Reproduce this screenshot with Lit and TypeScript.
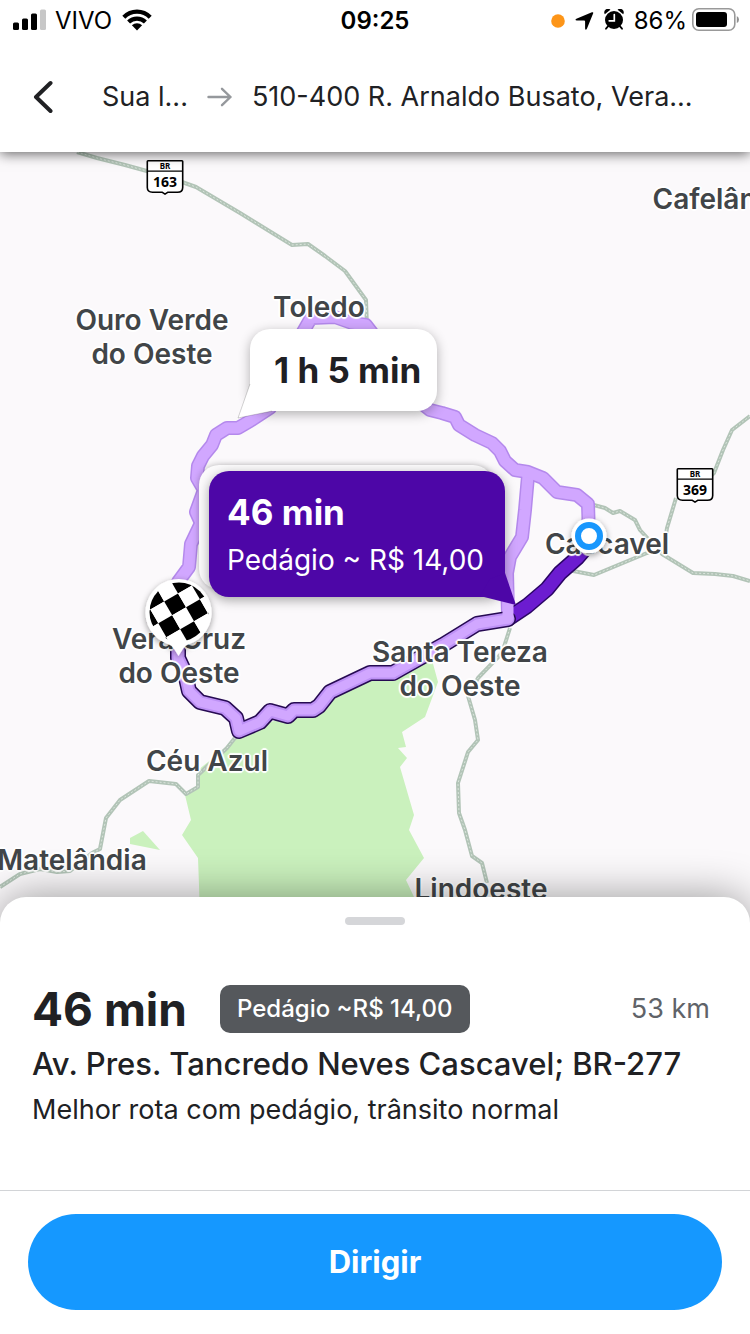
import { LitElement, html, svg, css } from "lit";
import { customElement } from "lit/decorators.js";
import { styleMap } from "lit/directives/style-map.js";

/* The map is drawn in its own coordinate space; overlays are placed in percent of it. */
const MAP_W = 750;
const MAP_H = 770;
const at = (x: number, y: number) =>
  styleMap({ left: `${(x / MAP_W) * 100}%`, top: `${(y / MAP_H) * 100}%` });

const PLACES: { x: number; y: number; lines: string[] }[] = [
  { x: 725, y: 47, lines: ["Cafelândia"] },
  { x: 319, y: 155, lines: ["Toledo"] },
  { x: 152, y: 185, lines: ["Ouro Verde", "do Oeste"] },
  { x: 607, y: 392, lines: ["Cascavel"] },
  { x: 179, y: 504, lines: ["Vera Cruz", "do Oeste"] },
  { x: 460, y: 517, lines: ["Santa Tereza", "do Oeste"] },
  { x: 207, y: 609, lines: ["Céu Azul"] },
  { x: 72, y: 708, lines: ["Matelândia"] },
  { x: 481, y: 737, lines: ["Lindoeste"] },
];

const ROADS = [
  "M77 0L97 6L125 13L165 24L196 35L240 61L292 93L308 92L325 104L345 119L366 148L367 175",
  "M750 264L732 278L723 298L714 321L700 334M676 346L667 376L664 395",
  "M590 352L605 356L613 361L620 359L635 368L640 378L662 402L693 421L715 422L733 424L750 429",
  "M568 418L594 423L647 401L660 398",
  "M510 476L502 501L478 526L468 544L475 568L478 588L468 600L458 631L459 661L465 678L472 704L482 711L487 731",
  "M238 582L227 596L198 623L198 635L186 642L176 632L149 629L120 648L106 666L100 697L92 701L70 719L57 720L40 717L20 722L0 735",
];

const ALT_ROUTE =
  "M178 430L189 415L191 392L201 371L196 360L204 338L197 326L198 314L203 304L212 293L216 283L227 276L238 276L250 269L270 256L303 180L311 166L335 165L352 171L366 173L376 186L420 250L430 258L442 261L455 265L459 273L475 283L492 291L500 299L505 309L515 318L528 320L543 326L557 340L577 343L588 352L589 384";
const LINK_ROUTE = "M528 324L525 358L522 385L510 405L507 421L508 462";
const TOLL_ROUTE =
  "M178 498L178 506L185 521L189 539L200 550L225 556L236 566L239 579L260 570L270 559L288 564L294 558L313 558L319 554L330 540L370 521L393 521L400 517L443 493L477 472L508 467";
const LEAD_ROUTE = "M509 466L527 454L547 437L560 421L577 406L589 392";

const line = (d: string, stroke: string, width: number, cap = "round") => svg`
  <path d=${d} fill="none" stroke=${stroke} stroke-width=${width}
    stroke-linejoin="round" stroke-linecap=${cap}></path>`;

const shield = (x: number, y: number, num: string) => svg`
  <g transform="translate(${x} ${y})">
    <path d="M1.5 .8H35.5Q36.2 .8 36.2 1.5V27.5Q36.2 32.2 31 32.2H21.5L18.5 34.2L15.5 32.2H6Q.8 32.2 .8 27.5V1.5Q.8 .8 1.5 .8Z"
      fill="#fff" stroke="#000" stroke-width="1.6" stroke-linejoin="round"></path>
    <path d="M1 11.2H36" stroke="#000" stroke-width="1.3"></path>
    <text x="18.5" y="9" class="shield-top">BR</text>
    <text x="18.5" y="27" class="shield-num">${num}</text>
  </g>`;

@customElement("route-map")
class RouteMap extends LitElement {
  static styles = css`
    :host { display: block; position: relative; overflow: hidden; background: #fbf9fb; }
    .scene { position: relative; aspect-ratio: 750 / 770; min-width: 100%; min-height: 100%; }
    .art { position: absolute; inset: 0; width: 100%; height: 100%; }
    .shield-top, .shield-num {
      font-family: "Noto Sans", "Open Sans", sans-serif; font-weight: 700; text-anchor: middle; fill: #000;
    }
    .shield-top { font-size: 8px; }
    .shield-num { font-size: 14px; }
    .place {
      position: absolute; transform: translate(-50%, -50%);
      font-size: 28px; line-height: 34px; font-weight: 600; color: #414548;
      text-align: center; white-space: nowrap;
      text-shadow: 0 0 2px #fff, 1px 1px 1px #fff, -1px -1px 1px #fff, 1px -1px 1px #fff, -1px 1px 1px #fff,
        2px 0 1px #fff, -2px 0 1px #fff, 0 2px 1px #fff, 0 -2px 1px #fff;
    }
    .place span { display: block; }
    .group { position: absolute; z-index: 0; inset: 0; pointer-events: none; }
    .callout {
      position: absolute; display: flex; flex-direction: column; gap: 8px; border: 0; margin: 0;
      padding: 19px 16px; font-family: inherit; text-align: left; white-space: nowrap;
      border-radius: 20px; color: #1f2024; cursor: pointer; pointer-events: auto;
    }
    .time { font-size: 35px; line-height: 44px; font-weight: 700; }
    .toll { font-size: 28px; line-height: 36px; font-weight: 400; }
    .alt { background: #fff; padding-left: 24px; box-shadow: 0 3px 12px rgba(0, 0, 0, .3); }
    .best { background: #4d06a7; color: #fff; padding: 19px 21px 19px 18px; box-shadow: 0 3px 12px rgba(0, 0, 0, .35); }
    .best::before {
      content: ""; position: absolute; z-index: -1; inset: -6px 12px 8px -10px; border-radius: 20px;
      background: #fcfbfc; box-shadow: 0 0 6px rgba(0, 0, 0, .28);
    }
    .tail { position: absolute; width: 36px; height: 36px; overflow: visible; }
    .alt .tail { left: -12px; bottom: -7px; }
    .best .tail { right: -11px; bottom: -8px; }
  `;

  render() {
    return html`
      <div class="scene">
        <svg class="art" viewBox="0 0 750 770" preserveAspectRatio="none" aria-hidden="true">
          <path fill="#caf1bd" d="M185 643L191 668L182 683L198 706L199 733L200 770H420L414 745L406 728L424 706L409 678L414 663L400 615L407 606L398 596L406 595L402 580L425 565L438 530L432 508L400 516L370 521L330 540L313 558L239 579L223 598L198 618L198 635Z"></path>
          <path fill="#caf1bd" d="M130 686L143 679L160 698L130 692Z"></path>
          ${ROADS.map((d) => svg`${line(d, "#b2c4b7", 4, "butt")}
            <path d=${d} fill="none" stroke="#dbe5dd" stroke-width="1" stroke-dasharray="2 2"></path>`)}
          ${line(LINK_ROUTE, "#b489ec", 14)}
          ${line(ALT_ROUTE, "#b489ec", 14)}
          ${line(LINK_ROUTE, "#d1a7ff", 11)}
          ${line(ALT_ROUTE, "#d1a7ff", 11)}
          ${line(LEAD_ROUTE, "#2a0564", 16)}
          ${line(LEAD_ROUTE, "#6c1cd0", 13)}
          ${line(TOLL_ROUTE, "#260a52", 16)}
          ${line(TOLL_ROUTE, "#bd91f5", 13)}
          ${line(TOLL_ROUTE, "#d1a7ff", 9)}
          ${line("M508 440L508 466", "#d1a7ff", 11)}
          ${shield(146.5, 8, "163")}
          ${shield(676.5, 316, "369")}
        </svg>
        ${PLACES.map(
          (p) => html`<div class="place" style=${at(p.x, p.y)}>
            ${p.lines.map((l) => html`<span>${l}</span>`)}
          </div>`
        )}
        <svg class="art" viewBox="0 0 750 770" preserveAspectRatio="none" aria-hidden="true">
          <defs>
            <filter id="drop" x="-30%" y="-30%" width="160%" height="160%">
              <feDropShadow dx="0" dy="2" stdDeviation="3" flood-opacity=".4"></feDropShadow>
            </filter>
            <clipPath id="flag"><circle cx="179" cy="460" r="29.5"></circle></clipPath>
          </defs>
          <g filter="url(#drop)">
            <path fill="#fff" d="M179 427A33.5 33.5 0 0 1 188 492.5Q185 493.5 183.5 496L178.5 504L173.5 496Q172 493.5 169 492.5A33.5 33.5 0 0 1 179 427Z"></path>
          </g>
          <g clip-path="url(#flag)">
            <g transform="translate(172.2 463.3) rotate(-30)">
              ${[-3, -2, -1, 0, 1, 2].map((r) =>
                [-3, -2, -1, 0, 1, 2].map(
                  (c) => svg`<rect x=${c * 16} y=${r * 16} width="16" height="16"
                    fill=${(r + c) % 2 !== 0 ? "#000" : "#fff"}></rect>`
                )
              )}
            </g>
          </g>
          <g filter="url(#drop)"><circle cx="589" cy="384" r="17.5" fill="#fff"></circle></g>
          <circle cx="589" cy="384" r="11" fill="#fff" stroke="#1897fd" stroke-width="6"></circle>
        </svg>
        <div class="group">
          <button class="callout alt" style=${at(250, 177)}>
            <svg class="tail" viewBox="0 0 36 36" aria-hidden="true">
              <path d="M12 2L0 36L34 29L26 12Z" fill="#fff"></path>
              <path d="M12 2L0 36L34 29" fill="none" stroke="#000" stroke-opacity=".25" stroke-width=".7"></path>
            </svg>
            <span class="time">1 h 5 min</span>
          </button>
        </div>
        <div class="group">
          <button class="callout best" style=${at(209, 319)}>
            <svg class="tail" viewBox="0 0 36 36" aria-hidden="true">
              <path d="M25 4L36 36L0 27L10 10Z" fill="#4d06a7"></path>
            </svg>
            <span class="time">46 min</span>
            <span class="toll">Pedágio ~ R$ 14,00</span>
          </button>
        </div>
      </div>
    `;
  }
}

@customElement("status-bar")
class StatusBar extends LitElement {
  static styles = css`
    :host {
      display: grid; grid-template-columns: 1fr auto 1fr; align-items: center;
      height: 42px; padding: 0 11px; font-size: 24px; line-height: 30px; color: #000;
    }
    .side { display: flex; align-items: center; gap: 10px; }
    .end { justify-content: flex-end; }
    .carrier { display: flex; align-items: center; gap: 8px; }
    .clock { font-weight: 600; }
    .power { display: flex; align-items: center; gap: 4px; }
    svg { display: block; flex: none; }
  `;

  render() {
    return html`
      <div class="side">
        <span class="carrier">
          <svg width="36" height="24" viewBox="0 0 36 24" aria-hidden="true">
            <rect x="2" y="13.5" width="6" height="7.5" rx="1.5"></rect>
            <rect x="11" y="9.5" width="6" height="11.5" rx="1.5"></rect>
            <rect x="20" y="4.5" width="6" height="16.5" rx="1.5"></rect>
            <rect x="29" y=".5" width="6" height="20.5" rx="1.5" fill="#c7c7c7"></rect>
          </svg>
          <span>VIVO</span>
        </span>
        <svg width="30" height="24" viewBox="0 0 30 24" aria-hidden="true">
          <g fill="none" stroke="#000" stroke-width="4.2">
            <path d="M1.8 8.2A18.6 18.6 0 0 1 28.2 8.2"></path>
            <path d="M6.6 13A11.9 11.9 0 0 1 23.4 13"></path>
          </g>
          <path d="M15 21.5L9.9 16.3A7.4 7.4 0 0 1 20.1 16.3Z"></path>
        </svg>
      </div>
      <span class="clock">09:25</span>
      <div class="side end">
        <svg width="14" height="14" viewBox="0 0 14 14" aria-hidden="true"><circle cx="7" cy="7" r="6.8" fill="#fd9518"></circle></svg>
        <svg width="19" height="18" viewBox="0 0 19 18" aria-hidden="true">
          <path d="M16.9 .3Q18.6 -.3 18.2 1.3L12 16.6Q10.6 19 10.1 16.6V9.4Q10.1 8.4 9.1 8.4H1.8Q-.6 8 1.4 6.8Z"></path>
        </svg>
        <svg width="20" height="24" viewBox="0 0 20 24" aria-hidden="true">
          <circle cx="10" cy="11" r="9"></circle>
          <path d="M.8 5.2A3.6 3.6 0 0 1 6.4 .8ZM19.2 5.2A3.6 3.6 0 0 0 13.6 .8Z"></path>
          <path d="M4.2 17.2L2 19.7M15.8 17.2L18 19.7" stroke="#000" stroke-width="1.8" stroke-linecap="round"></path>
          <path d="M10.3 5.6V11.8H5.2" fill="none" stroke="#fff" stroke-width="1.7" stroke-linecap="round"></path>
        </svg>
        <span class="power">
          <span>86%</span>
          <svg width="48" height="26" viewBox="0 0 48 26" aria-hidden="true">
            <rect x="1.8" y=".8" width="42" height="21.4" rx="6" fill="none" stroke="#999" stroke-width="1.6"></rect>
            <rect x="5" y="4" width="31" height="15" rx="3"></rect>
            <path d="M45.800 8Q48 9 48 11.5T45.800 15Z" fill="#8f8f8f"></path>
          </svg>
        </span>
      </div>
    `;
  }
}

@customElement("app-root")
class AppRoot extends LitElement {
  static styles = css`
    :host {
      display: flex; flex-direction: column; min-height: 100vh; background: #fff; color: #202124;
      font-family: Inter, "Liberation Sans", sans-serif;
    }
    button { font-family: inherit; }
    header { position: relative; z-index: 2; background: #fff; box-shadow: 0 2px 12px rgba(0, 0, 0, .6); }
    nav {
      display: flex; align-items: center; height: 110px; box-sizing: border-box; padding: 0 50px 0 32px;
      font-size: 27px; line-height: 32px; white-space: nowrap;
    }
    .back { border: 0; padding: 0; background: none; display: flex; margin-right: 49px; cursor: pointer; }
    .arrow { margin: 0 19px; flex: none; }
    route-map { flex: 1 0 auto; }
    .sheet {
      position: relative; z-index: 1; margin-top: -25px; background: #fff; border-radius: 26px 26px 0 0;
      box-shadow: 0 0 44px rgba(0, 0, 0, .4);
    }
    .grip { width: 60px; height: 8px; border-radius: 4px; background: #d5d6d9; margin: 0 auto; }
    .top { padding-top: 20px; }
    .details { padding: 56px 40px 64px 32px; }
    .summary { display: flex; align-items: center; height: 56px; }
    h1 { margin: 0 33px 0 0; font-size: 46px; line-height: 56px; font-weight: 700; }
    .badge {
      background: #55585c; color: #fff; font-size: 24px; line-height: 32px; font-weight: 500;
      padding: 8px 17px; border-radius: 10px;
    }
    .distance { margin-left: auto; font-size: 27px; line-height: 32px; color: #606368; }
    .via { margin: 0; padding-top: 8px; font-size: 31px; line-height: 38px; font-weight: 500; }
    .note { margin: 0; padding-top: 11px; font-size: 27px; line-height: 32px; }
    .actions { border-top: 1px solid #d2d4d7; padding: 23px 28px 24px; }
    .drive {
      display: block; width: 100%; height: 96px; border: 0; border-radius: 48px; background: #1598ff; color: #fff;
      font-size: 31px; line-height: 38px; font-weight: 700; cursor: pointer;
    }
  `;

  render() {
    return html`
      <header>
        <status-bar></status-bar>
        <nav>
          <button class="back" aria-label="Voltar">
            <svg width="21" height="34" viewBox="0 0 21 34" aria-hidden="true">
              <path d="M18.5 3L4 17L18.5 31" fill="none" stroke="#202124" stroke-width="4" stroke-linecap="round" stroke-linejoin="round"></path>
            </svg>
          </button>
          <span>Sua l...</span>
          <svg class="arrow" width="26" height="20" viewBox="0 0 26 20" aria-hidden="true">
            <path d="M1.5 10H23.5M15 1.8L23.5 10L15 18.2" fill="none" stroke="#95989c" stroke-width="2.4" stroke-linecap="round" stroke-linejoin="round"></path>
          </svg>
          <span>510-400 R. Arnaldo Busato, Vera...</span>
        </nav>
      </header>
      <route-map></route-map>
      <section class="sheet">
        <div class="top"><div class="grip"></div></div>
        <div class="details">
          <div class="summary">
            <h1>46 min</h1>
            <span class="badge">Pedágio ~R$ 14,00</span>
            <span class="distance">53 km</span>
          </div>
          <p class="via">Av. Pres. Tancredo Neves Cascavel; BR-277</p>
          <p class="note">Melhor rota com pedágio, trânsito normal</p>
        </div>
        <div class="actions"><button class="drive">Dirigir</button></div>
      </section>
    `;
  }
}
